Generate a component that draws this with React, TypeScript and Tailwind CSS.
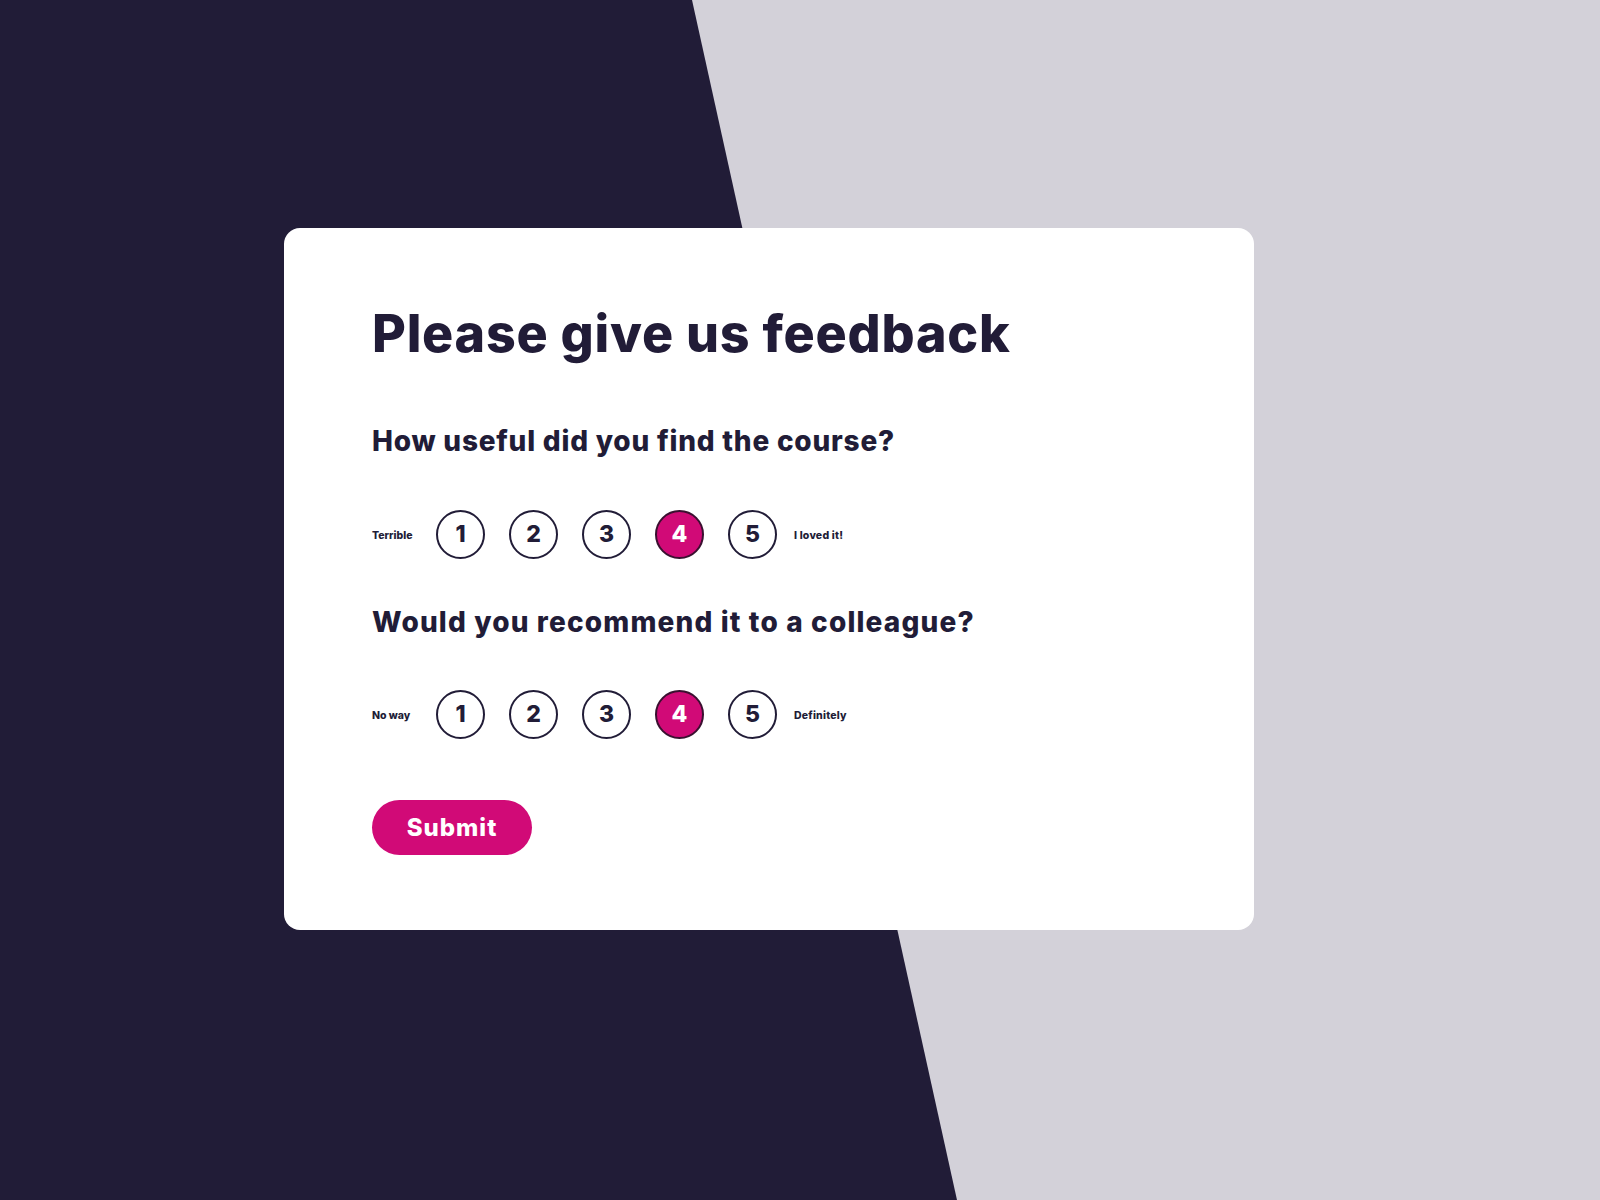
import React from "react";

const font = { fontFamily: "Inter, 'Open Sans', sans-serif" };

function Rating({ left, right }: { left: string; right: string }) {
  return (
    <div className="flex h-[50px] items-center">
      <span className="mt-[3px] w-[64px] text-[10.5px] font-extrabold tracking-[0px] text-[#211c37]">{left}</span>
      <div className="flex items-center gap-[24px]">
        {[1, 2, 3, 4, 5].map((n) => (
          <div
            key={n}
            className={
              n === 4
                ? "flex h-[49px] w-[49px] items-center justify-center rounded-full border-2 border-[#3a1030] bg-[#d10a77] text-[23px] font-extrabold text-white"
                : "flex h-[49px] w-[49px] items-center justify-center rounded-full border-2 border-[#211c37] bg-white text-[23px] font-extrabold text-[#211c37]"
            }
          >
            {n}
          </div>
        ))}
      </div>
      <span className="ml-[17px] mt-[3px] text-[10.5px] font-extrabold tracking-[0.2px] text-[#211c37]">{right}</span>
    </div>
  );
}

export default function App() {
  return (
    <div className="relative h-[1200px] w-full overflow-hidden bg-[#d3d1d9]" style={font}>
      <div className="absolute inset-0 bg-[#211c37] [clip-path:polygon(0_0,692px_0,957px_100%,0_100%)]" />
      <div className="relative pl-[284px] pt-[228px]">
        <div className="flex h-[702px] w-[970px] flex-col rounded-[16px] bg-white pl-[88px] pt-[76px]">
          <div className="flex h-[60px] items-center">
            <h1 className="text-[52px] font-extrabold leading-none tracking-[0.75px] text-[#211c37]">
              Please give us feedback
            </h1>
          </div>
          <div className="mt-[57px] flex h-[40px] items-center">
            <h2 className="text-[28px] font-extrabold leading-none tracking-[0.78px] text-[#211c37]">
              How useful did you find the course?
            </h2>
          </div>
          <div className="mt-[48px]">
            <Rating left="Terrible" right="I loved it!" />
          </div>
          <div className="mt-[43px] flex h-[40px] items-center">
            <h2 className="text-[28px] font-extrabold leading-none tracking-[1.15px] text-[#211c37]">
              Would you recommend it to a colleague?
            </h2>
          </div>
          <div className="mt-[47px]">
            <Rating left="No way" right="Definitely" />
          </div>
          <div className="mt-[61px]">
            <button className="flex h-[55px] w-[160px] items-center justify-center rounded-full bg-[#d10a77] text-[24px] font-extrabold tracking-[1px] text-white">
              Submit
            </button>
          </div>
        </div>
      </div>
    </div>
  );
}
